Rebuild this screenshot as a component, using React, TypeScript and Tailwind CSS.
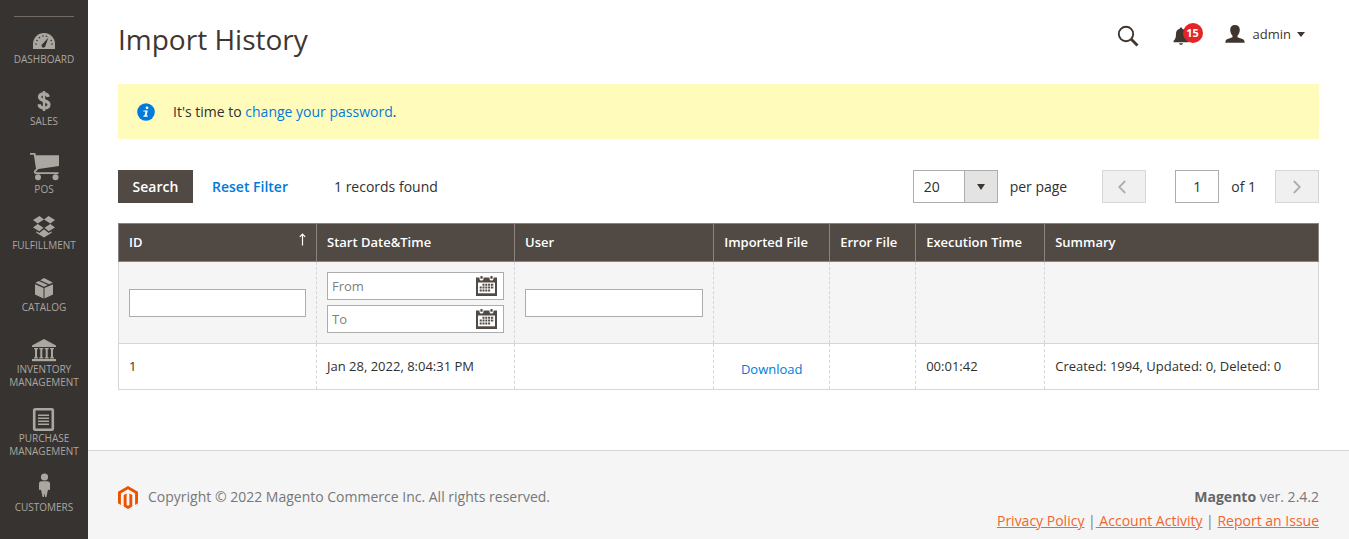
import React, { useState } from 'react';

interface MenuItem {
    label: string
    icon: React.ReactNode
    tall?: boolean
}

interface ImportRecord {
    id: string
    startedAt: string
    user: string
    file: string
    errorFile: string
    executionTime: string
    summary: string
}

const menuItems: MenuItem[] = [
    {
        label: "Dashboard",
        icon: (
            <>
                <path d="M5 24v-5a11 11 0 0 1 22 0v5z" />
                <path d="M20.5 12.5l-3 8.2a2 2 0 1 1-2.8-1.9z" fill="#373330" />
                <g fill="#373330">
                    <circle cx="8" cy="19" r=".8" />
                    <circle cx="9" cy="15.5" r=".8" />
                    <circle cx="11.5" cy="12.6" r=".8" />
                    <circle cx="15" cy="11" r=".8" />
                    <circle cx="18.5" cy="11.2" r=".8" />
                    <circle cx="23.2" cy="15.5" r=".8" />
                    <circle cx="24" cy="19" r=".8" />
                </g>
            </>
        ),
    },
    {
        label: "Sales",
        icon: (
            <>
                <path
                    d="M20.3 9.8c-.5-2-2-2.9-4.5-2.9-2.6 0-4.3 1.1-4.3 3.1 0 4.600 9.500 2.600 9.500 7.600 0 2.200-1.900 3.500-4.800 3.500-3 0-4.800-1.300-5.200-3.800"
                    fill="none"
                    stroke="currentColor"
                    strokeWidth="3.200"
                />
                <path d="M14.800 4h2.400v20h-2.400z" />
            </>
        ),
    },
    {
        label: "POS",
        tall: true,
        icon: (
            <>
                <path d="M6.5 6.3H31v10.8L9 20.2z" />
                <path
                    d="M2 4.9h4.6L9 20.2l-2 2c-.7 1 0 1.9 1 1.9h22.5"
                    fill="none"
                    stroke="currentColor"
                    strokeWidth="1.8"
                />
                <circle cx="10" cy="28.2" r="3" />
                <circle cx="27.5" cy="28.2" r="3" />
            </>
        ),
    },
    {
        label: "Fulfillment",
        icon: (
            <>
                <path d="M11.5 5L16 8.5l-6.3 4L5 9z" />
                <path d="M20.500 5L27 9l-4.700 3.500L16 8.500z" />
                <path d="M9.700 13l5.800 3.700-4.200 3.500L5 16.500z" />
                <path d="M22.300 13l4.700 3.500-6.300 3.700-4.200-3.500z" />
                <path d="M16 18.200l4.700 3.700 3-1.700v1.600L16 26.500l-7.700-4.700v-1.600l3 1.700z" />
            </>
        ),
    },
    {
        label: "Catalog",
        icon: (
            <>
                <path d="M7 11.200l8.500 3.800v10.500L7 21.500z" />
                <path d="M25 11.200L16.500 15v10.500l8.500-4z" />
                <path d="M7.400 9.800l3.400-1.900 9 4-3.800 1.900z" />
                <path d="M12.200 7.200L16 5l8.800 4.600-3.600 1.700z" />
            </>
        ),
    },
    {
        label: "Inventory Management",
        icon: (
            <>
                <path d="M16 4l12 6.500V12H4v-1.500z" />
                <path d="M6 13h4v1.200H9v8h1v1.300H6v-1.300h1v-8H6zM11.300 13h4v1.200h-1v8h1v1.300h-4v-1.300h1v-8h-1zM16.700 13h4v1.200h-1v8h1v1.300h-4v-1.300h1v-8h-1zM22 13h4v1.200h-1v8h1v1.300h-4v-1.300h1v-8h-1z" />
                <path d="M4 24h24v2.200H4z" />
            </>
        ),
    },
    {
        label: "Purchase Management",
        icon: (
            <>
                <rect x="6.200" y="5.200" width="18.600" height="20.600" rx="1" fill="none" stroke="currentColor" strokeWidth="2.600" />
                <path d="M10 10.500h11v1.500H10zM10 13.500h11V15H10zM10 16.500h11V18H10zM10 19.500h11V21H10z" />
            </>
        ),
    },
    {
        label: "Customers",
        icon: (
            <>
                <circle cx="16.500" cy="4" r="3.600" />
                <path d="M13.500 8.300h6c1.600 0 2.500 1 2.500 2.500v5.400c0 .9-1.500 1.200-1.700.2l-.5 1L18.400 24h-1.300l-.6-4-.6 4h-1.300l-1.400-6.600-.5-1c-.2 1-1.700.7-1.700-.2v-5.400c0-1.500.9-2.500 2.500-2.500z" />
            </>
        ),
    },
];

const records: ImportRecord[] = [
    {
        id: "1",
        startedAt: "Jan 28, 2022, 8:04:31 PM",
        user: "",
        file: "Download",
        errorFile: "",
        executionTime: "00:01:42",
        summary: "Created: 1994, Updated: 0, Deleted: 0",
    },
];

const Sidebar: React.FC = () => (
    <nav className="w-[88px] shrink-0 bg-[#373330] pt-4">
        <div className="mx-3.5 mb-1 h-px bg-[#736963]" />
        {menuItems.map((item) => (
            <a
                key={item.label}
                href="#"
                className="flex min-h-[62px] flex-col items-center px-1 pt-1 pb-[11px] text-center text-[10px] leading-[13px] text-[#aaa6a0] uppercase hover:text-white"
            >
                <svg
                    viewBox={item.tall ? "0 0 32 34" : "0 0 32 28"}
                    className={item.tall ? "h-[34px] w-8 shrink-0" : "h-7 w-8 shrink-0"}
                    fill="currentColor"
                    aria-hidden="true"
                >
                    {item.icon}
                </svg>
                <span>{item.label}</span>
            </a>
        ))}
    </nav>
);

const PageHeader: React.FC = () => (
    <header className="mb-[26px] flex items-start justify-between pt-5">
        <h1 className="text-[28px] leading-[38px] text-[#41362f]">Import History</h1>
        <div className="flex h-8 items-center pr-3.5 text-[#41362f]">
            <button type="button" aria-label="Search" className="mr-[34px]">
                <svg viewBox="0 0 22 22" className="h-[22px] w-[22px]" fill="none" stroke="currentColor" aria-hidden="true">
                    <circle cx="9" cy="9" r="7.200" strokeWidth="1.900" />
                    <path d="M14 14l6.500 6.500" strokeWidth="2.800" />
                </svg>
            </button>
            <button type="button" aria-label="Notifications" className="relative mr-9">
                <svg viewBox="0 0 16 18" className="h-[18px] w-4" fill="currentColor" aria-hidden="true">
                    <path d="M8 .5c.8 0 1.200.5 1.200 1.200 2.600.6 3.800 2.500 3.800 5 0 4 .8 5.800 2.500 7.300v1.200H.5V14C2.200 12.500 3 10.700 3 6.700c0-2.500 1.200-4.400 3.800-5C6.800 1 7.200.5 8 .5z" />
                    <path d="M6 16.300h4c-.3 1-1.100 1.500-2 1.500s-1.700-.5-2-1.500z" />
                </svg>
                <span className="absolute -top-1 left-2.5 flex h-5 w-5 items-center justify-center rounded-full bg-[#e22626] text-[11px] font-bold text-white">
                    15
                </span>
            </button>
            <button type="button" className="flex items-center pb-1 text-[13px]">
                <svg viewBox="0 0 20 18" className="mr-2 h-[18px] w-5" fill="currentColor" aria-hidden="true">
                    <path d="M10 0c3 0 4.800 2 4.800 4.800 0 2.400-.9 4.600-2.300 5.900v1.600l5.500 2c1.200.5 1.600 1.600 1.600 3.500H.4c0-1.900.4-3 1.600-3.500l5.500-2v-1.600C6.100 9.400 5.200 7.200 5.200 4.800 5.200 2 7 0 10 0z" />
                </svg>
                admin
                <svg viewBox="0 0 8 5" className="ml-1.5 h-[5px] w-2" fill="currentColor" aria-hidden="true">
                    <path d="M0 0h8L4 5z" />
                </svg>
            </button>
        </div>
    </header>
);

const Toolbar: React.FC = () => {
    const [perPage, setPerPage] = useState("20");
    const [page, setPage] = useState("1");

    return (
        <div className="mb-5 flex items-center justify-between">
            <div className="flex items-center">
                <button type="button" className="h-[33px] w-[75px] bg-[#514943] font-semibold text-white">
                    Search
                </button>
                <button type="button" className="ml-[19px] font-semibold text-[#007bdb]">
                    Reset Filter
                </button>
                <p className="ml-[46px]">1 records found</p>
            </div>
            <div className="flex items-center">
                <div className="relative">
                    <select
                        id="per-page"
                        value={perPage}
                        onChange={(e) => setPerPage(e.target.value)}
                        className="block h-[33px] w-[85px] appearance-none border border-[#adadad] bg-white pl-2.5"
                    >
                        <option>20</option>
                        <option>30</option>
                        <option>50</option>
                        <option>100</option>
                        <option>200</option>
                    </select>
                    <span className="pointer-events-none absolute inset-y-0 right-0 flex w-[34px] items-center justify-center border border-[#adadad] bg-[#e3e3e3]">
                        <svg viewBox="0 0 8 6" className="h-1.5 w-2" fill="#41362f" aria-hidden="true">
                            <path d="M0 0h8L4 6z" />
                        </svg>
                    </span>
                </div>
                <label htmlFor="per-page" className="ml-3">per page</label>
                <button
                    type="button"
                    disabled
                    aria-label="Previous page"
                    className="ml-[35px] flex h-[33px] w-11 items-center justify-center border border-[#d6d6d6] bg-[#f0f0f0] text-[#adadad]"
                >
                    <svg viewBox="0 0 8 14" className="mr-1 h-3.5 w-2" fill="none" stroke="currentColor" strokeWidth="1.800" aria-hidden="true">
                        <path d="M7.200 1L1.200 7l6 6" />
                    </svg>
                </button>
                <input
                    id="page"
                    type="text"
                    value={page}
                    onChange={(e) => setPage(e.target.value)}
                    className="ml-[29px] h-[33px] w-11 border border-[#adadad] bg-white text-center"
                />
                <label htmlFor="page" className="ml-3">of 1</label>
                <button
                    type="button"
                    disabled
                    aria-label="Next page"
                    className="ml-[19px] flex h-[33px] w-11 items-center justify-center border border-[#d6d6d6] bg-[#f0f0f0] text-[#adadad]"
                >
                    <svg viewBox="0 0 8 14" className="h-3.5 w-2" fill="none" stroke="currentColor" strokeWidth="1.800" aria-hidden="true">
                        <path d="M.8 1l6 6-6 6" />
                    </svg>
                </button>
            </div>
        </div>
    );
};

const DateInput: React.FC<{ label: string }> = ({ label }) => (
    <div className="flex h-7 items-center border border-[#adadad] bg-white">
        <input
            type="text"
            aria-label={label}
            placeholder={label}
            className="w-full min-w-0 px-1 placeholder:text-[#808080] focus:outline-none"
        />
        <button type="button" aria-label={`Pick ${label} date`} className="mr-1.5 shrink-0">
            <svg viewBox="0 0 21 20" className="h-5 w-[21px]" aria-hidden="true">
                <path d="M0 1.500h21V20H0z" fill="#514943" />
                <path d="M2 6.500h17v10.800H2z" fill="#fff" />
                <path d="M3.500 0h1v2.500h2V0h1v3.200L6.500 4.500h-2l-1-1.300zM13.500 0h1v2.500h2V0h1v3.200l-1 1.300h-2l-1-1.300z" fill="#fff" />
                <path d="M4.500 0h2v2.500h-2zM14.500 0h2v2.500h-2z" fill="#514943" />
                <path
                    d="M6.500 8.700H18M3.700 11.500H18M3.700 14.500h11.200"
                    fill="none"
                    stroke="#514943"
                    strokeWidth="1.900"
                    strokeDasharray="2 .8"
                />
            </svg>
        </button>
    </div>
);

const HistoryTable: React.FC = () => {
    const th = "h-[38px] border border-[#8a837f] px-2.5 pb-0.5 text-left font-semibold text-white";
    const td = "border-x border-y border-[#d6d6d6] [border-inline-style:dashed] first:[border-left-style:solid] last:[border-right-style:solid] px-2.5";

    return (
        <table className="w-full table-fixed border-collapse text-[13px] leading-[18px]">
            <colgroup>
                <col className="w-[16.5%]" />
                <col className="w-[16.5%]" />
                <col className="w-[16.6%]" />
                <col className="w-[116px]" />
                <col className="w-[86px]" />
                <col className="w-[129px]" />
                <col />
            </colgroup>
            <thead>
                <tr className="bg-[#514943]">
                    <th className={th}>
                        <div className="flex justify-between">
                            ID
                            <svg viewBox="0 0 7 13" className="h-[13px] w-[7px]" fill="none" stroke="currentColor" aria-hidden="true">
                                <path d="M3.500 12.500V1M.8 3.800L3.500 1l2.700 2.800" strokeWidth="1.200" />
                            </svg>
                        </div>
                    </th>
                    <th className={th}>Start Date&amp;Time</th>
                    <th className={th}>User</th>
                    <th className={th}>Imported File</th>
                    <th className={th}>Error File</th>
                    <th className={th}>Execution Time</th>
                    <th className={th}>Summary</th>
                </tr>
            </thead>
            <tbody>
                <tr className="h-[82px] bg-[#f5f5f5]">
                    <td className={td}>
                        <input type="text" aria-label="ID" className="block h-7 w-full border border-[#adadad] bg-white px-1" />
                    </td>
                    <td className={td}>
                        <div className="flex flex-col gap-[5px]">
                            <DateInput label="From" />
                            <DateInput label="To" />
                        </div>
                    </td>
                    <td className={td}>
                        <input type="text" aria-label="User" className="block h-7 w-full border border-[#adadad] bg-white px-1" />
                    </td>
                    <td className={td} />
                    <td className={td} />
                    <td className={td} />
                    <td className={td} />
                </tr>
                {records.map((item) => (
                    <tr key={item.id} className="h-[46px]">
                        <td className={`${td} pb-0.5`}>{item.id}</td>
                        <td className={`${td} pb-0.5`}>{item.startedAt}</td>
                        <td className={`${td} pb-0.5`}>{item.user}</td>
                        <td className={`${td} pt-1 text-center`}>
                            <a href="#" className="text-[#007bdb] hover:underline">{item.file}</a>
                        </td>
                        <td className={`${td} pb-0.5`}>{item.errorFile}</td>
                        <td className={`${td} pb-0.5`}>{item.executionTime}</td>
                        <td className={`${td} pb-0.5`}>{item.summary}</td>
                    </tr>
                ))}
            </tbody>
        </table>
    );
};

const Footer: React.FC = () => (
    <footer className="flex flex-1 items-start justify-between border-t border-[#d6d6d6] bg-[#f5f5f5] px-[30px] pt-[34px] pb-1 leading-6 text-[#777]">
        <p className="flex items-center">
            <svg viewBox="0 0 20 23" className="mr-2.5 h-[23px] w-5 shrink-0" fill="#eb5202" aria-hidden="true">
                <path d="M10 0l10 5.800v11.500l-2.900 1.600V7.400L10 3.300 2.900 7.400v11.500L0 17.300V5.800z" />
                <path d="M5.700 9l2.900-1.600v11.500l1.400.8 1.400-.8V7.400L14.300 9v11.500L10 23l-4.300-2.500z" />
            </svg>
            Copyright © 2022 Magento Commerce Inc. All rights reserved.
        </p>
        <div className="text-right">
            <p>
                <strong className="font-bold text-[#666]">Magento</strong> ver. 2.4.2
            </p>
            <p>
                <a href="#" className="text-[#ef672f] underline">Privacy Policy</a>
                {" |"}
                <a href="#" className="text-[#ef672f] underline">{" Account Activity"}</a>
                {" | "}
                <a href="#" className="text-[#ef672f] underline">Report an Issue</a>
            </p>
        </div>
    </footer>
);

const App: React.FC = () => {
    return (
        <div className="flex min-h-screen bg-white font-['Open_Sans',sans-serif] text-sm text-[#303030]">
            <Sidebar />
            <div className="flex min-w-0 flex-1 flex-col">
                <main className="px-[30px] pb-[60px]">
                    <PageHeader />
                    <div className="mb-[31px] flex h-[55px] items-center bg-[#fffbbb] pl-[19px]">
                        <svg viewBox="0 0 18 18" className="mr-[18px] h-[18px] w-[18px]" aria-hidden="true">
                            <circle cx="9" cy="9" r="8.800" fill="#007bdb" />
                            <circle cx="10" cy="4.800" r="1.400" fill="#fff" />
                            <path d="M6.500 7.400h4.300l-1.300 5.200h1.400l-.3 1.200H6.400l.3-1.200h.8l1-4H6.200z" fill="#fff" />
                        </svg>
                        <p>
                            It's time to <a href="#" className="text-[#007bdb] hover:underline">change your password</a>.
                        </p>
                    </div>
                    <Toolbar />
                    <HistoryTable />
                </main>
                <Footer />
            </div>
        </div>
    );
};

export default App;
